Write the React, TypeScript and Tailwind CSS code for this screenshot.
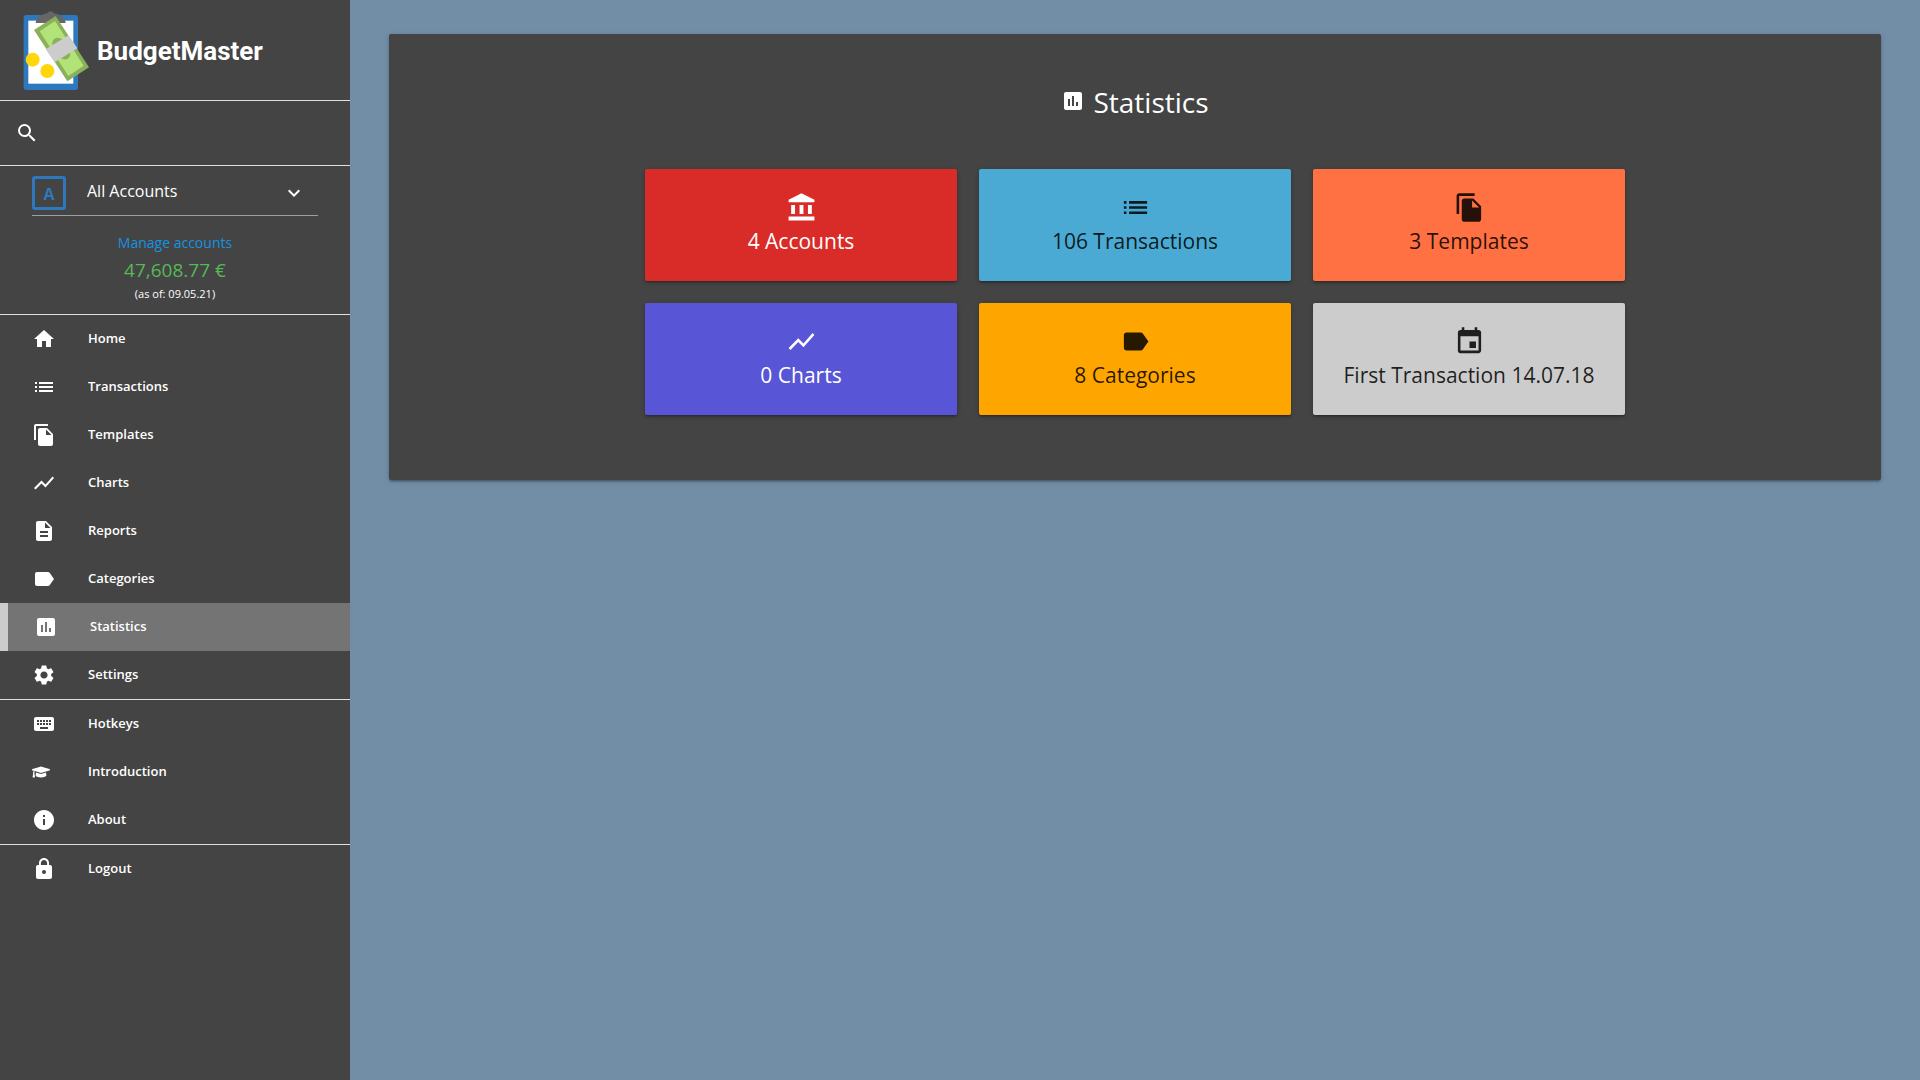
import React from 'react';
import type { IconType } from 'react-icons';
import {
  MdAccountBalance,
  MdDescription,
  MdEvent,
  MdExpandMore,
  MdFileCopy,
  MdHome,
  MdInfo,
  MdInsertChart,
  MdKeyboard,
  MdLabel,
  MdList,
  MdLock,
  MdSearch,
  MdSettings,
  MdShowChart,
} from 'react-icons/md';
import { FaGraduationCap } from 'react-icons/fa';

type NavItem = { label: string; icon: IconType; active?: boolean; small?: boolean };

const navGroups: NavItem[][] = [
  [
    { label: 'Home', icon: MdHome },
    { label: 'Transactions', icon: MdList },
    { label: 'Templates', icon: MdFileCopy },
    { label: 'Charts', icon: MdShowChart },
    { label: 'Reports', icon: MdDescription },
    { label: 'Categories', icon: MdLabel },
    { label: 'Statistics', icon: MdInsertChart, active: true },
    { label: 'Settings', icon: MdSettings },
  ],
  [
    { label: 'Hotkeys', icon: MdKeyboard },
    { label: 'Introduction', icon: FaGraduationCap, small: true },
    { label: 'About', icon: MdInfo },
  ],
  [{ label: 'Logout', icon: MdLock }],
];

const tiles: { label: string; icon: IconType; tone: string }[] = [
  { label: '4 Accounts', icon: MdAccountBalance, tone: 'bg-[#d92b27] text-white' },
  { label: '106 Transactions', icon: MdList, tone: 'bg-[#4aaad3] text-black/85' },
  { label: '3 Templates', icon: MdFileCopy, tone: 'bg-[#ff7043] text-black/85' },
  { label: '0 Charts', icon: MdShowChart, tone: 'bg-[#5855d6] text-white' },
  { label: '8 Categories', icon: MdLabel, tone: 'bg-[#ffa500] text-black/85' },
  { label: 'First Transaction 14.07.18', icon: MdEvent, tone: 'bg-[#cccccc] text-black/85' },
];

function Logo() {
  return (
    <svg viewBox="37 0 204 270" className="h-[90px] w-[68px] shrink-0" aria-hidden="true">
      <rect x="39" y="30" width="163" height="225" rx="8" fill="#2e79bd" />
      <rect x="53" y="47" width="135" height="189" fill="#fff" />
      <path d="M75 54C76 40 91 28 110 25a11 11 0 0 1 20 0c19 3 34 15 35 29z" fill="#666" />
      <path d="M135 33 235 187 170 229 70 75z" fill="#8bb05c" />
      <path d="M133 48 219 182 173 213 87 79z" fill="#b2e378" />
      <ellipse cx="152" cy="131" rx="22" ry="36" transform="rotate(-33 152 131)" fill="#8bb05c" />
      <path d="M174 91 200 130 132 172 105 133z" fill="#ccc" />
      <circle cx="66" cy="164" r="21" fill="#ffd50b" />
      <circle cx="110" cy="198" r="21" fill="#ffd50b" />
    </svg>
  );
}

function NavLink({ item }: { item: NavItem }) {
  const Icon = item.icon;
  return (
    <a
      href="#"
      aria-current={item.active ? 'page' : undefined}
      className={
        item.active
          ? 'flex h-12 items-center gap-8 border-l-8 border-[#cccccc] bg-[#747474] pl-[26px]'
          : 'flex h-12 items-center gap-8 pl-8'
      }
    >
      <span className="flex w-6 items-center">
        <Icon className={item.small ? 'size-[18px]' : 'size-6'} />
      </span>
      <span className="text-[13px] font-semibold">{item.label}</span>
    </a>
  );
}

export default function App() {
  return (
    <div className="flex min-h-screen bg-[#728ea7] font-['Open_Sans',sans-serif] text-white">
      <aside className="w-[350px] shrink-0 bg-[#444444]">
        <a href="#" className="flex h-[101px] items-center gap-1.5 border-b border-[#e0e0e0] pl-[23px]">
          <Logo />
          <span className="pt-0.5 font-['Roboto',sans-serif] text-[26px] font-bold">BudgetMaster</span>
        </a>

        <form role="search" className="flex h-[65px] items-center gap-3 border-b border-[#e0e0e0] px-[15px]">
          <label htmlFor="search" aria-label="Search">
            <MdSearch className="size-6" />
          </label>
          <input id="search" type="search" className="min-w-0 grow bg-transparent text-base outline-none" />
        </form>

        <div className="flex flex-col items-center border-b border-[#e0e0e0] px-8 pt-[10px] pb-[10px]">
          <div className="flex w-full items-center border-b border-[#9e9e9e] pb-[5px]">
            <span className="flex size-[34px] shrink-0 items-center justify-center rounded-[3px] border-3 border-[#2e79bd] pt-0.5 text-base font-bold text-[#2e79bd]">
              A
            </span>
            <div className="relative ml-[21px] grow">
              <select aria-label="Account" className="w-full appearance-none bg-transparent pb-1 text-base outline-none">
                <option>All Accounts</option>
              </select>
              <MdExpandMore className="pointer-events-none absolute top-0.5 right-3 size-6" />
            </div>
          </div>
          <a href="#" className="mt-4 text-sm leading-[22px] text-[#1593e0]">
            Manage accounts
          </a>
          <span className="text-[19px] leading-8 text-[#57b857]">47,608.77 €</span>
          <span className="text-[11px] leading-4">(as of: 09.05.21)</span>
          <span className="h-0.5" />
        </div>

        <nav>
          {navGroups.map((group, index) => (
            <ul key={index} className="border-b border-[#e0e0e0] last:border-b-0">
              {group.map((item) => (
                <li key={item.label}>
                  <NavLink item={item} />
                </li>
              ))}
            </ul>
          ))}
        </nav>
      </aside>

      <main className="min-w-0 grow px-[39px] pt-[34px]">
        <section className="rounded-xs bg-[#444444] px-6 pt-[46px] pb-[65px] shadow-[0_2px_2px_0_rgba(0,0,0,0.14),0_3px_1px_-2px_rgba(0,0,0,0.12),0_1px_5px_0_rgba(0,0,0,0.2)]">
          <h1 className="flex items-center justify-center gap-2 text-[28px] leading-[45px]">
            <MdInsertChart className="mb-1 size-6" />
            Statistics
          </h1>
          <div className="mx-auto mt-11 grid max-w-[980px] grid-cols-3 gap-[22px]">
            {tiles.map(({ label, icon: Icon, tone }) => (
              <div
                key={label}
                className={`flex h-28 flex-col items-center rounded-xs pt-[23px] shadow-[0_2px_2px_0_rgba(0,0,0,0.14),0_3px_1px_-2px_rgba(0,0,0,0.12),0_1px_5px_0_rgba(0,0,0,0.2)] ${tone}`}
              >
                <Icon className="size-[31px]" />
                <span className="text-[21px] leading-9">{label}</span>
              </div>
            ))}
          </div>
        </section>
      </main>
    </div>
  );
}
